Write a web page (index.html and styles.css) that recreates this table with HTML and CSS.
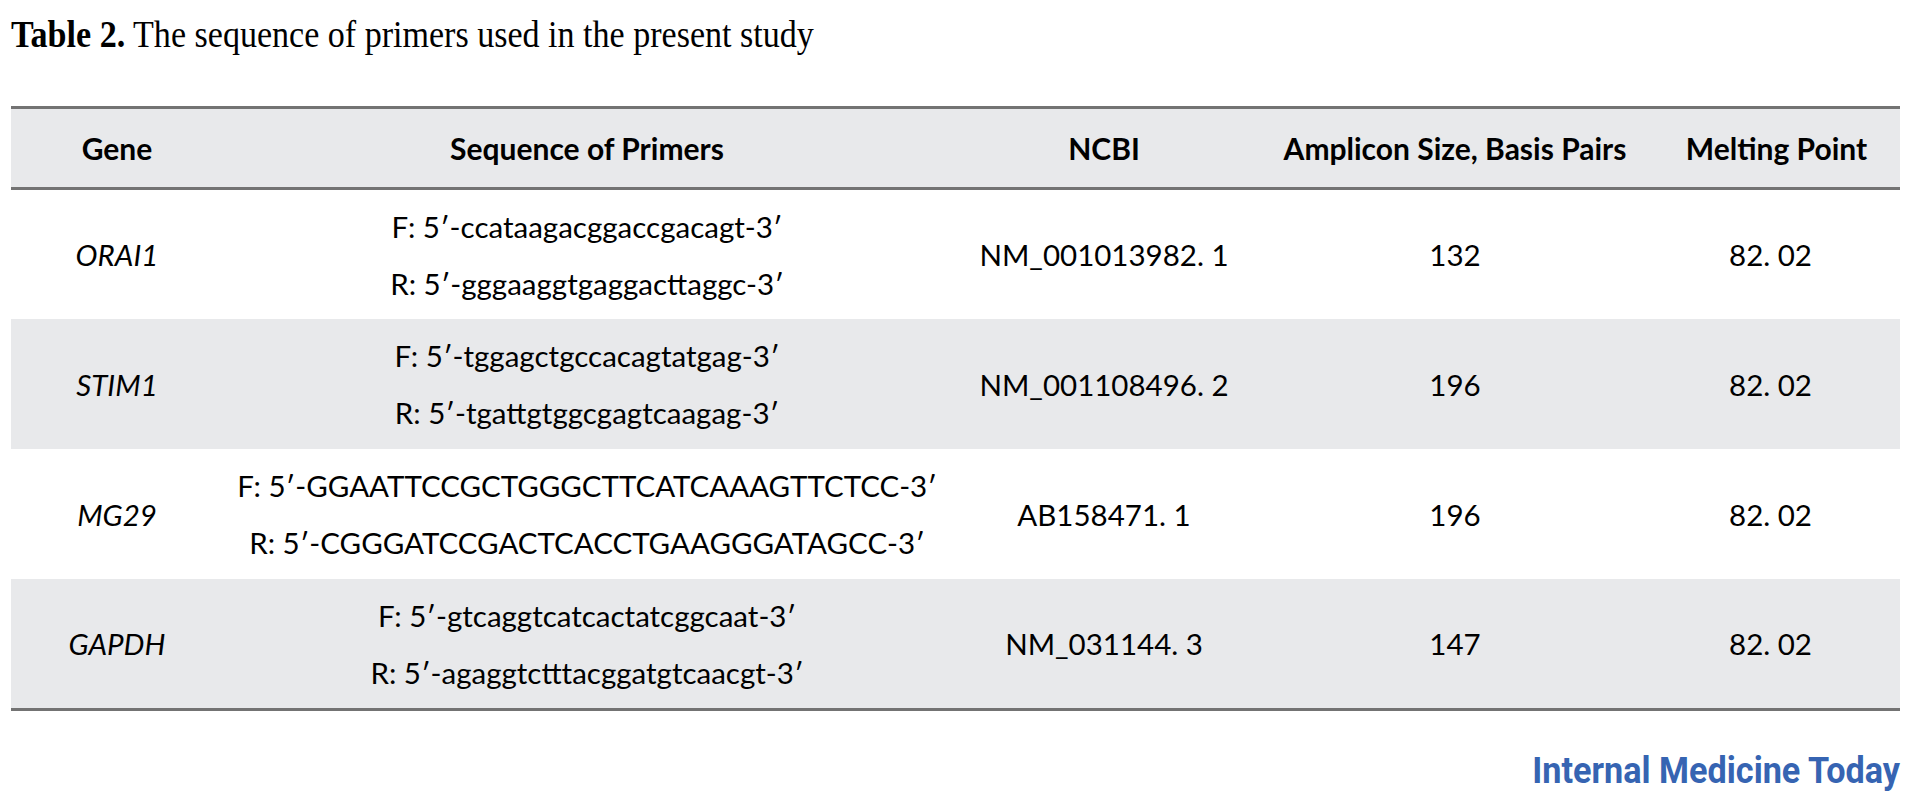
FILE: index.html
```html
<!DOCTYPE html>
<html>
<head>
<meta charset="utf-8">
<title>Table 2</title>
<link rel="stylesheet" href="styles.css">
</head>
<body>
<div class="page">
  <h1 class="title"><span class="title-in"><b>Table 2.</b> The sequence of primers used in the present study</span></h1>
  <div class="tbl">
    <div class="row head">
      <div class="c">Gene</div>
      <div class="c">Sequence of Primers</div>
      <div class="c">NCBI</div>
      <div class="c amp">Amplicon Size, Basis Pairs</div>
      <div class="c">Melting Point</div>
    </div>
    <div class="row r1">
      <div class="c gene">ORAI1</div>
      <div class="c seq"><span>F: 5′-ccataagacggaccgacagt-3′</span><span>R: 5′-gggaaggtgaggacttaggc-3′</span></div>
      <div class="c">NM_001013982. 1</div>
      <div class="c">132</div>
      <div class="c mp">82. 02</div>
    </div>
    <div class="row r2 alt">
      <div class="c gene">STIM1</div>
      <div class="c seq"><span>F: 5′-tggagctgccacagtatgag-3′</span><span>R: 5′-tgattgtggcgagtcaagag-3′</span></div>
      <div class="c">NM_001108496. 2</div>
      <div class="c">196</div>
      <div class="c mp">82. 02</div>
    </div>
    <div class="row r3">
      <div class="c gene">MG29</div>
      <div class="c seq"><span>F: 5′-GGAATTCCGCTGGGCTTCATCAAAGTTCTCC-3′</span><span>R: 5′-CGGGATCCGACTCACCTGAAGGGATAGCC-3′</span></div>
      <div class="c">AB158471. 1</div>
      <div class="c">196</div>
      <div class="c mp">82. 02</div>
    </div>
    <div class="row r4 alt">
      <div class="c gene">GAPDH</div>
      <div class="c seq"><span>F: 5′-gtcaggtcatcactatcggcaat-3′</span><span>R: 5′-agaggtctttacggatgtcaacgt-3′</span></div>
      <div class="c">NM_031144. 3</div>
      <div class="c">147</div>
      <div class="c mp">82. 02</div>
    </div>
  </div>
  <div class="footer"><span class="brand">Internal Medicine Today</span></div>
</div>
</body>
</html>
```

FILE: styles.css
```css
html, body {
  margin: 0;
  padding: 0;
  background: #ffffff;
}

.page {
  width: 1889px;
  padding: 15px 0 0 11px;
}

.title {
  margin: 0;
  font: 400 38px/38px "Liberation Serif", "Times New Roman", serif;
  color: #000;
  white-space: nowrap;
}

.title-in {
  display: inline-block;
  transform: scaleX(0.896);
  transform-origin: 0 50%;
}

.title-in b {
  font-weight: 700;
}

.tbl {
  margin-top: 53px;
  border-top: 3px solid #737373;
  border-bottom: 3px solid #737373;
  font-family: "Lato", "Noto Sans", sans-serif;
  font-size: 29.5px;
  color: #000;
}

.row {
  display: grid;
  grid-template-columns: 212px 728px 306px 396px 1fr;
  height: 130px;
}

.row.head {
  height: 78px;
  background: #e8e9eb;
  border-bottom: 3px solid #737373;
  font-weight: 700;
  font-size: 30px;
}

.row.r1,
.row.r4 {
  height: 129px;
}

.row.alt {
  background: #e8e9eb;
}

.c {
  display: flex;
  align-items: center;
  justify-content: center;
  text-align: center;
  white-space: nowrap;
}

.c.gene {
  font-style: italic;
}

.c.seq {
  flex-direction: column;
  line-height: 57px;
}

.c.mp {
  padding-right: 12px;
}

.footer {
  display: flex;
  justify-content: flex-end;
  margin-top: 40px;
  height: 40px;
  align-items: center;
}

.brand {
  display: inline-block;
  font: 700 36px/40px "Roboto", "Liberation Sans", sans-serif;
  color: #3664b2;
  transform: scaleX(0.95);
  transform-origin: 100% 50%;
}
```
